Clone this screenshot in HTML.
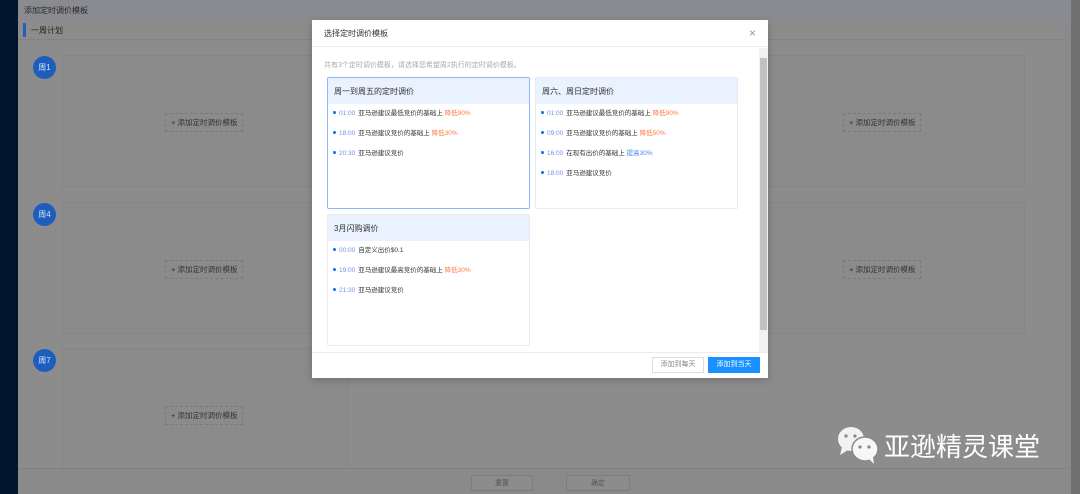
<!DOCTYPE html>
<html><head><meta charset="utf-8"><style>
*{box-sizing:border-box;margin:0;padding:0}
body{width:1080px;height:494px;overflow:hidden;background:#898a8d;font-family:"Liberation Sans","Noto Sans CJK SC",sans-serif;position:relative}
.abs{position:absolute}
.side{left:0;top:0;width:18px;height:494px;background:#00152d}
.top{left:18px;top:0;width:1053px;height:20px;background:#8a8b90;font-size:8px;color:#2a2a2a;padding:5px 6px}
.panel{left:18px;top:20px;width:1047px;height:448px;background:#8c8c8c}
.ptitle{left:18px;top:20px;width:1047px;height:20px;border-bottom:1px solid #838383;font-size:8px;color:#222;padding:5px 13px}
.bar{left:23px;top:23px;width:3px;height:14px;background:#1f5fbf}
.circ{width:23px;height:23px;border-radius:50%;background:#1d5dbd;color:#d8e4f5;font-size:8px;text-align:center;line-height:23px}
.box{border:1px solid #858585;background:#8b8b8b}
.add{border:1px dashed #7a7a7a;font-size:7.5px;color:#333;padding:3px 5px;white-space:nowrap}
.bot{left:18px;top:468px;width:1053px;height:26px;background:#8a8a8a;border-top:1px solid #828282}
.bbtn{border:1px solid #7d7d7d;background:#8c8c8c;font-size:7px;color:#555;text-align:center;line-height:15px}
.sb{left:1071px;top:0;width:9px;height:494px;background:#707070}
.modal{left:312px;top:20px;width:456px;height:358px;background:#fff;box-shadow:0 2px 8px rgba(0,0,0,.2)}
.mh{left:0;top:0;width:456px;height:27px;border-bottom:1px solid #ececec;font-size:8px;color:#333;padding:8px 12px}
.x{left:437px;top:6px;font-size:12px;color:#999}
.hint{left:12px;top:40px;font-size:7px;color:#aaa}
.card{width:203px;height:132px;background:#fff;border:1px solid #e6ebf3;border-radius:2px;overflow:hidden}
.card.sel{border:1px solid #8fb7ff}
.ch{height:26px;background:#eaf2ff;font-size:8px;color:#333;padding:8px 6px}
.it{position:relative;height:20px;font-size:6.5px;color:#333;padding:3px 0 0 11px;white-space:nowrap}
.it:before{content:"";position:absolute;left:5px;top:7px;width:3px;height:3px;border-radius:50%;background:#1a6cf0}
.t{color:#6b95ef;margin-right:3px}
.o{color:#ff7a45}
.b{color:#4a86f0}
.msb{left:447px;top:28px;width:9px;height:304px;background:#f1f1f1}
.thumb{left:448px;top:38px;width:7px;height:272px;background:#c1c1c1}
.mf{left:0;top:332px;width:456px;height:26px;border-top:1px solid #ececec}
.b1{left:340px;top:337px;width:52px;height:16px;border:1px solid #ddd;font-size:7px;color:#888;text-align:center;line-height:14px}
.b2{left:396px;top:337px;width:52px;height:16px;background:#1890ff;font-size:7px;color:#fff;text-align:center;line-height:16px}
.wm{left:884px;top:427px;font-size:26px;color:#fff;white-space:nowrap}
</style></head><body>
<div class="abs side"></div>
<div class="abs top">添加定时调价模板</div>
<div class="abs panel"></div>
<div class="abs ptitle">一周计划</div>
<div class="abs bar"></div>

<div class="abs circ" style="left:33px;top:56px">周1</div>
<div class="abs box" style="left:62px;top:55px;width:286px;height:132px"></div>
<div class="abs add" style="left:165px;top:113px">+ 添加定时调价模板</div>
<div class="abs box" style="left:740px;top:55px;width:285px;height:132px"></div>
<div class="abs add" style="left:843px;top:113px">+ 添加定时调价模板</div>

<div class="abs circ" style="left:33px;top:203px">周4</div>
<div class="abs box" style="left:62px;top:202px;width:286px;height:132px"></div>
<div class="abs add" style="left:165px;top:260px">+ 添加定时调价模板</div>
<div class="abs box" style="left:740px;top:202px;width:285px;height:132px"></div>
<div class="abs add" style="left:843px;top:260px">+ 添加定时调价模板</div>

<div class="abs circ" style="left:33px;top:349px">周7</div>
<div class="abs box" style="left:62px;top:348px;width:286px;height:122px"></div>
<div class="abs add" style="left:165px;top:406px">+ 添加定时调价模板</div>

<div class="abs bot"></div>
<div class="abs bbtn" style="left:471px;top:475px;width:62px;height:16px">重置</div>
<div class="abs bbtn" style="left:566px;top:475px;width:64px;height:16px">确定</div>
<div class="abs sb"></div>

<svg class="abs" style="left:836px;top:425px" width="46" height="40" viewBox="0 0 46 40">
<ellipse cx="15" cy="14" rx="13" ry="12" fill="#f2f2f2"/>
<path d="M6 22 L4 30 L12 25 Z" fill="#f2f2f2"/>
<circle cx="10" cy="11" r="1.6" fill="#888"/><circle cx="19" cy="11" r="1.6" fill="#888"/>
<ellipse cx="29" cy="24" rx="13" ry="12" fill="#f7f7f7" stroke="#8a8a8a" stroke-width="1.5"/>
<path d="M33 34 L38 39 L37 32 Z" fill="#f7f7f7"/>
<circle cx="24" cy="22" r="1.6" fill="#888"/><circle cx="33" cy="22" r="1.6" fill="#888"/>
</svg>
<div class="abs wm">亚逊精灵课堂</div>

<div class="abs modal">
 <div class="abs mh">选择定时调价模板</div>
 <div class="abs x">×</div>
 <div class="abs hint">共有3个定时调价模板，请选择您希望周2执行的定时调价模板。</div>
 <div class="abs card sel" style="left:15px;top:57px">
  <div class="ch">周一到周五的定时调价</div>
  <div class="it"><span class="t">01:00</span>亚马逊建议最低竞价的基础上 <span class="o">降低90%</span></div>
  <div class="it"><span class="t">18:00</span>亚马逊建议竞价的基础上 <span class="o">降低30%</span></div>
  <div class="it"><span class="t">20:30</span>亚马逊建议竞价</div>
 </div>
 <div class="abs card" style="left:223px;top:57px">
  <div class="ch">周六、周日定时调价</div>
  <div class="it"><span class="t">01:00</span>亚马逊建议最低竞价的基础上 <span class="o">降低90%</span></div>
  <div class="it"><span class="t">09:00</span>亚马逊建议竞价的基础上 <span class="o">降低50%</span></div>
  <div class="it"><span class="t">16:00</span>在现有出价的基础上 <span class="b">提高30%</span></div>
  <div class="it"><span class="t">18:00</span>亚马逊建议竞价</div>
 </div>
 <div class="abs card" style="left:15px;top:194px">
  <div class="ch">3月闪购调价</div>
  <div class="it"><span class="t">00:00</span>自定义出价$0.1</div>
  <div class="it"><span class="t">19:00</span>亚马逊建议最高竞价的基础上 <span class="o">降低30%</span></div>
  <div class="it"><span class="t">21:30</span>亚马逊建议竞价</div>
 </div>
 <div class="abs msb"></div>
 <div class="abs thumb"></div>
 <div class="abs mf"></div>
 <div class="abs b1">添加到每天</div>
 <div class="abs b2">添加到当天</div>
</div>
</body></html>
